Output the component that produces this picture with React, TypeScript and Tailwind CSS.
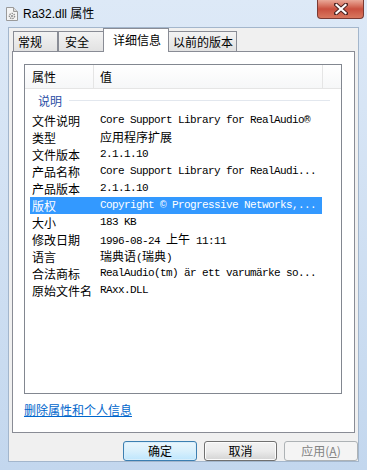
import React from "react";

const CJK = '"Noto Sans CJK SC", "Noto Sans", sans-serif';
const MONO = '"Liberation Mono", "Noto Sans CJK SC", monospace';

// Chinese run inside a monospace value
const Han = ({ children }: { children: React.ReactNode }) => (
  <span
    className="text-[12px] tracking-normal"
    style={{ fontFamily: CJK }}
  >
    {children}
  </span>
);

type Row = { label: string; value: React.ReactNode; selected?: boolean };

const rows: Row[] = [
  { label: "文件说明", value: "Core Support Library for RealAudio®" },
  { label: "类型", value: <Han>应用程序扩展</Han> },
  { label: "文件版本", value: "2.1.1.10" },
  { label: "产品名称", value: "Core Support Library for RealAudi..." },
  { label: "产品版本", value: "2.1.1.10" },
  {
    label: "版权",
    value: "Copyright © Progressive Networks,...",
    selected: true,
  },
  { label: "大小", value: "183 KB" },
  {
    label: "修改日期",
    value: (
      <>
        1996-08-24 <Han>上午</Han> 11:11
      </>
    ),
  },
  {
    label: "语言",
    value: (
      <>
        <Han>瑞典语</Han>(<Han>瑞典</Han>)
      </>
    ),
  },
  { label: "合法商标", value: "RealAudio(tm) är ett varumärke so..." },
  { label: "原始文件名", value: "RAxx.DLL" },
];

const FileIcon = () => (
  <svg width="12" height="14" viewBox="0 0 12 14">
    <path d="M0.5 0.5h7l4 4v9h-11z" fill="#f4f4f4" stroke="#9a9a9a" />
    <path d="M7.5 0.5v4h4" fill="#dcdcdc" stroke="#9a9a9a" />
    <circle cx="6" cy="9" r="2.6" fill="none" stroke="#8b8b8b" strokeWidth="1.4" strokeDasharray="1.4 0.9" />
    <circle cx="6" cy="9" r="1" fill="#8b8b8b" />
  </svg>
);

const CloseX = () => (
  <svg width="14" height="12" viewBox="0 0 14 12">
    <path d="M2 1.5l10 9M12 1.5l-10 9" stroke="#4a2220" strokeWidth="4" strokeLinecap="square" />
    <path d="M2.5 2l9 8M11.5 2l-9 8" stroke="#ffffff" strokeWidth="2.2" strokeLinecap="square" />
  </svg>
);

const Tab = ({
  label,
  width,
  pad,
  selected,
}: {
  label: string;
  width: number;
  pad: number;
  selected?: boolean;
}) => (
  <div
    className={
      selected
        ? "relative z-10 -mx-[2px] -mb-px h-[24px] border border-b-0 border-[#898c95] bg-white pt-[1px] leading-[20px]"
        : "h-[20px] border border-b-0 border-[#898c95] bg-gradient-to-b from-[#f3f3f3] to-[#e2e2e2] pt-[1px] leading-[18px]"
    }
    style={{ width, paddingLeft: pad }}
  >
    {label}
  </div>
);

export default function App() {
  return (
    <div
      className="flex h-[470px] w-[367px] flex-col overflow-hidden bg-gradient-to-b from-[#dde9f7] to-[#c3d7ee] text-[12px] text-black"
      style={{ fontFamily: CJK }}
    >
      {/* title bar */}
      <div className="relative flex h-[27px] shrink-0 items-center pl-[6px]">
        <FileIcon />
        <span
          className="ml-[5px] text-[12px]"
          style={{ fontFamily: '"Liberation Sans", "Noto Sans CJK SC", sans-serif' }}
        >
          Ra32.dll 属性
        </span>
        <div className="absolute right-[3px] top-0 flex h-[19px] w-[47px] items-center justify-center rounded-b-[4px] border border-t-0 border-[#7a3a33] bg-gradient-to-b from-[#e9a898] via-[#c9503f] to-[#d8775f]">
          <CloseX />
        </div>
      </div>

      {/* client area */}
      <div className="mx-[8px] mb-[8px] flex flex-1 flex-col border border-[#a3b6cc] bg-[#f0f0f0]">
        {/* tabs */}
        <div className="flex h-[23px] items-end pl-[4px]">
          <Tab label="常规" width={45} pad={4} />
          <Tab label="安全" width={47} pad={6} />
          <Tab label="详细信息" width={66} pad={9} selected />
          <Tab label="以前的版本" width={70} pad={5} />
        </div>

        {/* tab panel */}
        <div className="ml-[3px] h-[382px] w-[343px] border border-[#898c95] bg-white">
          {/* list view */}
          <div className="ml-[11px] mt-[12px] flex h-[330px] w-[318px] flex-col border border-[#828790] bg-white">
            <div className="flex h-[24px] border-b border-[#e5e5e5] bg-gradient-to-b from-white to-[#f6f7f8] leading-[23px]">
              <div className="w-[69px] border-r border-[#e5e5e5] pl-[7px]">属性</div>
              <div className="w-[229px] border-r border-[#e5e5e5] pl-[6px]">值</div>
              <div className="flex-1" />
            </div>

            <div className="flex h-[23px] items-center pl-[13px] pr-[11px]">
              <span className="text-[#2b4ea6]">说明</span>
              <div className="ml-[7px] h-px flex-1 bg-[#e2e7ee]" />
            </div>

            {rows.map((r) => (
              <div key={r.label} className="flex h-[17px] pl-[5px]">
                <div
                  className={`flex w-[292px] items-center ${
                    r.selected ? "bg-[#3399ff] text-white" : ""
                  }`}
                >
                  <div className="w-[63px] shrink-0 whitespace-nowrap pl-[2px]">
                    {r.label}
                  </div>
                  <div
                    className="whitespace-nowrap pl-[7px] text-[11px] tracking-[-0.6px]"
                    style={{ fontFamily: MONO }}
                  >
                    {r.value}
                  </div>
                </div>
              </div>
            ))}
          </div>

          <div className="ml-[11px] mt-[8px] leading-[16px]">
            <span className="text-[#0066cc] underline">删除属性和个人信息</span>
          </div>
        </div>

        {/* buttons */}
        <div className="mt-[8px] flex gap-[7px] pl-[114px]">
          <button className="h-[20px] w-[74px] rounded-[3px] border border-[#3c7fb1] bg-gradient-to-b from-[#eaf6fd] via-[#d9f0fc] to-[#bee6fd] leading-[18px] shadow-[inset_0_0_0_1px_#d8eefb]">
            确定
          </button>
          <button className="h-[20px] w-[73px] rounded-[3px] border border-[#707070] bg-gradient-to-b from-[#f2f2f2] via-[#ebebeb] to-[#d4d4d4] leading-[18px] shadow-[inset_0_0_0_1px_#fcfcfc]">
            取消
          </button>
          <button className="h-[20px] w-[74px] rounded-[3px] border border-[#adb2b5] bg-[#f4f4f4] leading-[18px] text-[#838383]">
            应用(<span className="underline">A</span>)
          </button>
        </div>
      </div>
    </div>
  );
}
